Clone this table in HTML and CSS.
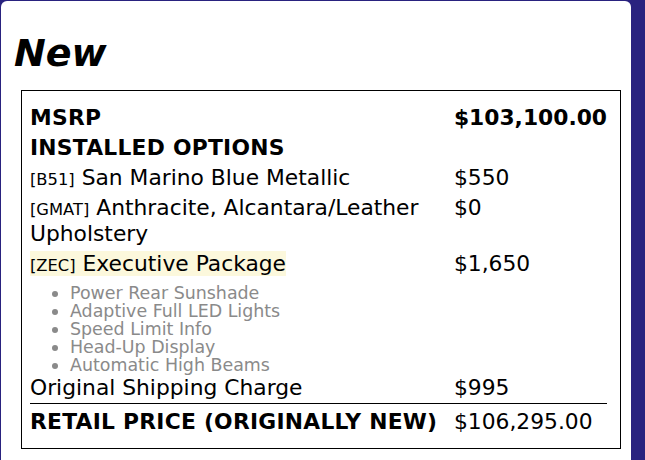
FILE: index.html
```html
<!DOCTYPE html>
<html>
<head>
<meta charset="utf-8">
<link rel="stylesheet" href="styles.css">
</head>
<body>
<div class="card">
  <h1 class="title">New</h1>
  <div class="box">
    <table class="price">
      <tr class="strong">
        <td class="label">MSRP</td>
        <td class="amount">$103,100.00</td>
      </tr>
      <tr class="strong">
        <td class="label" colspan="2">INSTALLED OPTIONS</td>
      </tr>
      <tr>
        <td class="label"><span class="code">[B51]</span> San Marino Blue Metallic</td>
        <td class="amount">$550</td>
      </tr>
      <tr>
        <td class="label"><span class="code">[GMAT]</span> Anthracite, Alcantara/Leather Upholstery</td>
        <td class="amount">$0</td>
      </tr>
      <tr>
        <td class="label">
          <span class="hl"><span class="code">[ZEC]</span> Executive Package</span>
          <ul class="features">
            <li>Power Rear Sunshade</li>
            <li>Adaptive Full LED Lights</li>
            <li>Speed Limit Info</li>
            <li>Head-Up Display</li>
            <li>Automatic High Beams</li>
          </ul>
        </td>
        <td class="amount">$1,650</td>
      </tr>
      <tr class="ship">
        <td class="label">Original Shipping Charge</td>
        <td class="amount">$995</td>
      </tr>
      <tr class="total">
        <td class="label bold">RETAIL PRICE (ORIGINALLY NEW)</td>
        <td class="amount">$106,295.00</td>
      </tr>
    </table>
  </div>
</div>
</body>
</html>
```

FILE: styles.css
```css
html, body {
  margin: 0;
  padding: 0;
}
body {
  background: #29227f;
  padding: 1px 14px 0 1px;
  height: 459px;
  overflow: hidden;
}
.card {
  box-sizing: border-box;
  background: #ffffff;
  border-radius: 6px 6px 0 0;
  width: 630px;
  height: 459px;
  padding: 1px 10px 0 20px;
}
.title {
  font-family: "DejaVu Sans", Verdana, sans-serif;
  font-weight: bold;
  font-style: italic;
  font-size: 38px;
  line-height: 46px;
  margin: 28px 0 14px -7px;
  color: #000;
}
.box {
  border: 1px solid #000;
  padding: 12px 13px 11px 8px;
  font-family: "DejaVu Sans", Verdana, sans-serif;
  font-size: 21.8px;
  color: #000;
}
.price {
  width: 100%;
  border-collapse: collapse;
}
.price td {
  padding: 2px 0;
  vertical-align: top;
  line-height: 26px;
}
.price .amount {
  white-space: nowrap;
  padding-left: 16px;
}
.strong td, .bold {
  font-weight: bold;
}
.strong .label, .bold {
  letter-spacing: 0.25px;
}
.total .label {
  white-space: nowrap;
}
.code {
  font-size: 0.75em;
  line-height: 1;
}
.hl {
  background: #fcf8dc;
}
.features {
  margin: 7px 0 -3px;
  padding-left: 40px;
  font-size: 0.8em;
  line-height: 18px;
  color: #8a8a8a;
  list-style: none;
}
.features li::before {
  content: "";
  display: inline-block;
  width: 6px;
  height: 6px;
  border-radius: 50%;
  background: #8a8a8a;
  margin-left: -18px;
  margin-right: 12px;
  vertical-align: middle;
}
.ship td {
  padding-bottom: 2px;
}
.total td {
  border-top: 1px solid #000;
  padding-top: 5px;
}
```
